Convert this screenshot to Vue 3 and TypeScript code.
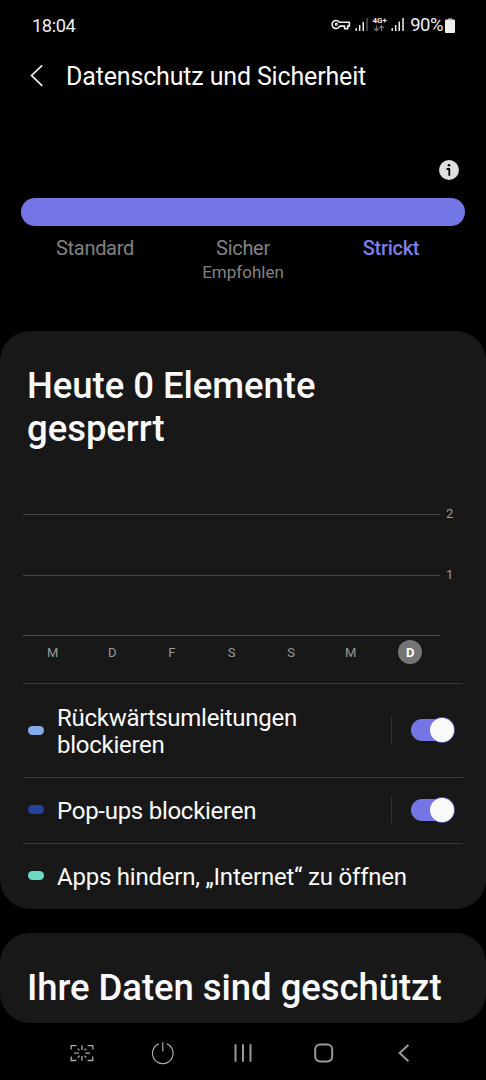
<script setup lang="ts">
import { ref } from 'vue'

interface Level { label: string; note?: string }
interface Blocker { label: string; color: string; enabled?: boolean; kind: string }

const levels: Level[] = [
  { label: 'Standard' },
  { label: 'Sicher', note: 'Empfohlen' },
  { label: 'Strickt' },
]
const activeLevel = ref(2)
const days = ['M', 'D', 'F', 'S', 'S', 'M', 'D']
const today = 6
const blockers = ref<Blocker[]>([
  { label: 'Rückwärtsumleitungen blockieren', color: '#86abe8', enabled: true, kind: 'tall' },
  { label: 'Pop-ups blockieren', color: '#24439a', enabled: true, kind: 'mid' },
  { label: 'Apps hindern, „Internet“ zu öffnen', color: '#6bd9c4', kind: 'last' },
])
</script>

<template>
  <div class="screen">
    <div class="status">
      <span class="clock">18:04</span>
      <svg class="indicators" width="78" height="22" viewBox="0 0 78 22">
        <g fill="none" stroke="#eee" stroke-width="1.6">
          <path d="M8.4 8.3h10v3.8h-1.7v2.6h-3.1v-2.6H8.7A4 4 0 1 1 8.4 8.3z" stroke-linejoin="round" />
          <circle cx="5.3" cy="10.2" r="1" stroke-width="1.2" />
        </g>
        <g fill="#eee">
          <rect x="24.5" y="14" width="1.4" height="3" />
          <rect x="28" y="11" width="1.4" height="6" />
          <rect x="31.5" y="8" width="1.5" height="9" />
          <rect x="35.3" y="4" width="1.5" height="13" fill="#555" />
          <rect x="60.5" y="14" width="1.4" height="3" />
          <rect x="64" y="11" width="1.4" height="6" />
          <rect x="67.5" y="7.5" width="1.5" height="9.5" />
          <rect x="71.3" y="4" width="1.5" height="13" />
        </g>
        <text x="41.5" y="9" class="network">4G+</text>
        <g fill="none" stroke="#777" stroke-width="1.2">
          <path d="M45.5 11.5v5M43.3 14.5l2.2 2.2 2.2-2.2M50.5 17v-5M48.3 14l2.2-2.2 2.2 2.2" />
        </g>
      </svg>
      <span class="percent">90%</span>
      <svg class="battery" width="10" height="15" viewBox="0 0 10 15">
        <rect x="3" y="0" width="4" height="2.5" fill="#777" />
        <rect x="0" y="1.5" width="10" height="13.5" rx="1" fill="#eee" />
      </svg>
    </div>

    <header class="header">
      <svg width="14" height="24" viewBox="0 0 14 24">
        <path d="M12.2 1.3L1.6 11.5l10.6 10.3" fill="none" stroke="#f2f2f2" stroke-width="1.7" />
      </svg>
      <h1>Datenschutz und Sicherheit</h1>
    </header>

    <div class="info">
      <svg width="20" height="20" viewBox="0 0 20 20">
        <circle cx="10" cy="10" r="10" fill="#dedede" />
        <circle cx="10" cy="5.2" r="1.3" fill="#000" />
        <path d="M7.6 9h2.7v6.8" fill="none" stroke="#000" stroke-width="1.8" stroke-linejoin="round" />
      </svg>
    </div>

    <div class="slider"></div>
    <div class="levels">
      <div
        v-for="(level, i) in levels"
        :key="level.label"
        class="level"
        :class="{ active: i === activeLevel }"
        @click="activeLevel = i"
      >
        <span class="level-name">{{ level.label }}</span>
        <span v-if="level.note" class="level-note">{{ level.note }}</span>
      </div>
    </div>

    <section class="card report">
      <h2>Heute 0 Elemente<br />gesperrt</h2>
      <div class="chart">
        <div class="band"><span>2</span></div>
        <div class="band lower"><span>1</span></div>
        <div class="axis"></div>
        <div class="days">
          <span v-for="(day, i) in days" :key="i" :class="{ today: i === today }">{{ day }}</span>
        </div>
      </div>
      <ul class="rows">
        <li v-for="item in blockers" :key="item.label" class="row" :class="item.kind">
          <i class="pill" :style="{ background: item.color }"></i>
          <span class="row-label">{{ item.label }}</span>
          <template v-if="item.enabled !== undefined">
            <i class="separator"></i>
            <button
              class="toggle"
              :class="{ on: item.enabled }"
              @click="item.enabled = !item.enabled"
            ><i></i></button>
          </template>
        </li>
      </ul>
    </section>

    <section class="card safe">
      <h2>Ihre Daten sind geschützt</h2>
    </section>

    <nav class="nav">
      <svg viewBox="0 0 32 32">
        <g fill="none" stroke="#aaa" stroke-width="1.3">
          <path d="M5.2 12.5V8.6h5.2M21.6 8.6h5.2v3.9M26.8 19.5v4h-5.2M10.4 23.5H5.2v-4" />
          <path d="M16 8.3v4.8M16 19v4.8M8 16.2h4.8M19.2 16.2H24M11.7 11.6l1.8 1.8M18.5 13.4l1.8-1.8M11.7 20.6l1.8-1.8M18.5 18.8l1.8 1.8" />
        </g>
      </svg>
      <svg viewBox="0 0 32 32">
        <path d="M11.8 6.9a10.3 10.3 0 1 0 8 0M15.8 5.2v9.3" fill="none" stroke="#aaa" stroke-width="1.2" />
      </svg>
      <svg viewBox="0 0 32 32">
        <path d="M8.5 7.2v17.6M16 7.2v17.6M23.5 7.2v17.6" fill="none" stroke="#999" stroke-width="2" />
      </svg>
      <svg viewBox="0 0 32 32">
        <rect x="7.2" y="7.6" width="17" height="16.8" rx="4.8" fill="none" stroke="#999" stroke-width="2" />
      </svg>
      <svg viewBox="0 0 32 32">
        <path d="M20.4 7.9L11.6 16l8.8 8.2" fill="none" stroke="#999" stroke-width="2" />
      </svg>
    </nav>
  </div>
</template>

<style>
body {
  margin: 0;
  background: #000;
}
</style>

<style scoped>
.screen {
  box-sizing: border-box;
  width: 486px;
  height: 1080px;
  overflow: hidden;
  background: #000;
  color: #fafafa;
  font-family: Roboto, "Liberation Sans", sans-serif;
}
.status {
  display: flex;
  align-items: center;
  height: 50px;
  padding: 0 31px 0 32px;
  font-size: 18.3px;
  color: #eee;
}
.clock {
  letter-spacing: -0.45px;
}
.indicators {
  margin-left: auto;
}
.network {
  font-size: 8px;
  font-weight: 700;
  fill: #eee;
}
.percent {
  margin-left: 1px;
  font-size: 18.5px;
  letter-spacing: -0.5px;
}
.battery {
  margin-left: 2px;
}
.header {
  display: flex;
  align-items: center;
  gap: 22px;
  height: 52px;
  padding-left: 30px;
}
h1 {
  margin: 0;
  padding-top: 1px;
  font-size: 25px;
  font-weight: 400;
  line-height: 31px;
  letter-spacing: -0.16px;
  white-space: nowrap;
}
.info {
  display: flex;
  justify-content: flex-end;
  padding: 58px 27px 0 0;
  height: 38px;
}
.slider {
  height: 28px;
  margin: 0 21px;
  border-radius: 14px;
  background: #7476e5;
}
.levels {
  display: grid;
  grid-template-columns: repeat(3, 1fr);
  height: 105px;
  margin: 0 21px;
  color: #828282;
}
.level {
  display: flex;
  flex-direction: column;
  align-items: center;
  padding-top: 9px;
}
.level-name {
  font-size: 20px;
  line-height: 26px;
  letter-spacing: -0.3px;
}
.level-note {
  font-size: 17px;
  line-height: 23px;
}
.active {
  color: #7c7eea;
  font-weight: 500;
}
.card {
  box-sizing: border-box;
  border-radius: 30px;
  background: #181818;
}
.report {
  height: 578px;
  padding: 33px 23px 0;
}
h2 {
  margin: 0 0 0 4px;
  font-size: 36.5px;
  font-weight: 500;
  line-height: 43px;
  letter-spacing: -0.05px;
  white-space: nowrap;
}
.chart {
  width: 417px;
  height: 169px;
  margin-top: 64px;
}
.band {
  display: flex;
  justify-content: flex-end;
  height: 60px;
  border-top: 1px solid #484848;
}
.lower {
  height: 59px;
}
.band span {
  width: 8px;
  margin: -9px -14px 0 0;
  font-size: 13px;
  line-height: 16px;
  color: #999;
}
.axis {
  height: 1px;
  background: #505050;
}
.days {
  display: grid;
  grid-template-columns: repeat(7, 1fr);
  justify-items: center;
  margin-top: 4px;
  font-size: 13px;
  line-height: 26px;
  color: #999;
}
.days span {
  width: 24px;
  height: 24px;
  text-align: center;
}
.days .today {
  border-radius: 50%;
  background: #757575;
  color: #fff;
  font-weight: 700;
}
.rows {
  margin: 0;
  padding: 0;
  list-style: none;
}
.row {
  display: flex;
  align-items: center;
  box-sizing: border-box;
  border-top: 1px solid #393939;
  padding: 0 8px 1px 5px;
}
.tall { height: 94px; }
.mid { height: 66px; padding-bottom: 2px; }
.last { height: 66px; padding-bottom: 2px; }
.pill {
  flex: none;
  width: 16px;
  height: 9px;
  margin-right: 13px;
  border-radius: 4.5px;
}
.row-label {
  width: 330px;
  padding-top: 3px;
  font-size: 24px;
  line-height: 27px;
  letter-spacing: -0.27px;
}
.last .row-label {
  width: auto;
  letter-spacing: -0.22px;
  white-space: nowrap;
}
.separator {
  flex: none;
  width: 1px;
  height: 27px;
  margin-left: 4px;
  background: #303030;
}
.toggle {
  display: flex;
  flex: none;
  align-items: center;
  width: 43px;
  height: 22px;
  margin-left: 19px;
  padding: 0;
  border: 0;
  border-radius: 11px;
  background: #666;
}
.toggle i {
  flex: none;
  width: 24px;
  height: 24px;
  border-radius: 50%;
  background: #fafafa;
}
.toggle.on {
  justify-content: flex-end;
  background: #7476e5;
}
.toggle.on i {
  box-shadow: 0 0 0 0.7px #7476e5;
}
.safe {
  height: 90px;
  margin-top: 24px;
  padding: 33px 23px 0;
}
.nav {
  display: flex;
  justify-content: space-between;
  padding: 14px 66px 0;
}
.nav svg {
  width: 32px;
  height: 32px;
}
</style>
